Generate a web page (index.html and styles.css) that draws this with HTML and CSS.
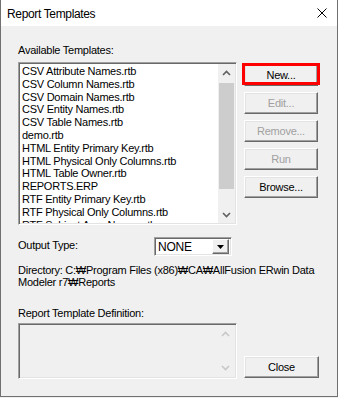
FILE: index.html
```html
<!DOCTYPE html>
<html lang="en">
<head>
<meta charset="UTF-8" />
<title>Report Templates</title>
<link rel="stylesheet" href="styles.css">
</head>
<body>

<div class="dialog">
  <!-- Title bar -->
  <div class="titlebar">
    <span class="title">Report Templates</span>
    <svg class="close-x" width="10" height="10" viewBox="0 0 10 10" aria-hidden="true">
      <path d="M0.5 0.5 L9.5 9.5 M9.5 0.5 L0.5 9.5" stroke="#000" stroke-width="1" fill="none" />
    </svg>
  </div>

  <div class="content">
    <div class="label">Available Templates:</div>

    <div class="top-row">
      <div class="listbox sunken">
        <ul class="items">
          <li>CSV Attribute Names.rtb</li>
          <li>CSV Column Names.rtb</li>
          <li>CSV Domain Names.rtb</li>
          <li>CSV Entity Names.rtb</li>
          <li>CSV Table Names.rtb</li>
          <li>demo.rtb</li>
          <li>HTML Entity Primary Key.rtb</li>
          <li>HTML Physical Only Columns.rtb</li>
          <li>HTML Table Owner.rtb</li>
          <li>REPORTS.ERP</li>
          <li>RTF Entity Primary Key.rtb</li>
          <li>RTF Physical Only Columns.rtb</li>
          <li>RTF Subject Area Names.rtb</li>
        </ul>
        <div class="scrollbar">
          <div class="arrow">
            <svg width="9" height="6" viewBox="0 0 9 6"><path d="M1 5 L4.5 1.5 L8 5" stroke="#606060" stroke-width="1.6" fill="none" /></svg>
          </div>
          <div class="track"><div class="thumb"></div></div>
          <div class="arrow">
            <svg width="9" height="6" viewBox="0 0 9 6"><path d="M1 1 L4.5 4.5 L8 1" stroke="#606060" stroke-width="1.6" fill="none" /></svg>
          </div>
        </div>
      </div>

      <div class="buttons">
        <button class="btn highlighted">New...</button>
        <button class="btn" disabled>Edit...</button>
        <button class="btn" disabled>Remove...</button>
        <button class="btn" disabled>Run</button>
        <button class="btn">Browse...</button>
      </div>
    </div>

    <div class="output-row">
      <span class="label">Output Type:</span>
      <div class="combo sunken">
        <span class="combo-value">NONE</span>
        <span class="combo-btn">
          <svg width="7" height="4" viewBox="0 0 7 4"><path d="M0 0 H7 L3.5 4 Z" fill="#000" /></svg>
        </span>
      </div>
    </div>

    <div class="directory">Directory: C:&#8361;Program Files (x86)&#8361;CA&#8361;AllFusion ERwin Data<br>Modeler r7&#8361;Reports</div>

    <div class="label def-label">Report Template Definition:</div>

    <div class="bottom-row">
      <div class="definition sunken">
        <div class="scrollbar disabled">
          <div class="arrow">
            <svg width="9" height="6" viewBox="0 0 9 6"><path d="M1 5 L4.5 1.5 L8 5" stroke="#c8c8c8" stroke-width="1.6" fill="none" /></svg>
          </div>
          <div class="track"></div>
          <div class="arrow">
            <svg width="9" height="6" viewBox="0 0 9 6"><path d="M1 1 L4.5 4.5 L8 1" stroke="#c8c8c8" stroke-width="1.6" fill="none" /></svg>
          </div>
        </div>
      </div>
      <button class="btn close-btn">Close</button>
    </div>
  </div>
</div>

</body>
</html>
```

FILE: styles.css
```css
/* Reset & base */
*, *::before, *::after {
  box-sizing: border-box;
}
body {
  margin: 0;
  background: #f0f0f0;
  font-family: 'Liberation Sans', Arial, sans-serif;
  font-size: 11px;
  letter-spacing: -0.25px;
  color: #000;
}

/* Dialog frame */
.dialog {
  width: 338px;
  height: 397px;
  background: #f0f0f0;
  border: 1px solid #707070;
  border-top: none;
  display: flex;
  flex-direction: column;
}

.titlebar {
  height: 26px;
  background: #fff;
  display: flex;
  align-items: center;
  justify-content: space-between;
  padding: 0 10px 0 6px;
}
.title {
  font-size: 12px;
  letter-spacing: -0.35px;
  padding-top: 1px;
}

.content {
  padding: 18px 0 0 17px;
}

.label {
  line-height: 13px;
}

/* 3D borders */
.sunken {
  border: 1px solid;
  border-color: #a0a0a0 #fff #fff #a0a0a0;
  box-shadow: inset 1px 1px 0 #696969, inset -1px -1px 0 #e3e3e3;
}

/* Top row: list + buttons */
.top-row {
  display: flex;
  gap: 7px;
  margin-top: 5px;
}

.listbox {
  width: 219px;
  height: 163px;
  background: #fff;
  display: flex;
  padding: 1px;
}

.items {
  list-style: none;
  margin: 0;
  padding: 1px 0 0 2px;
  flex: 1;
  overflow: hidden;
  line-height: 12.8px;
  white-space: nowrap;
}

.scrollbar {
  width: 17px;
  background: #f0f0f0;
  display: flex;
  flex-direction: column;
}
.scrollbar .arrow {
  height: 17px;
  display: flex;
  align-items: center;
  justify-content: center;
}
.scrollbar .track {
  flex: 1;
  padding: 2px 1px 17px;
}
.scrollbar .thumb {
  height: 106px;
  background: #cdcdcd;
}

/* Buttons */
.buttons {
  display: flex;
  flex-direction: column;
  gap: 6px;
  padding-top: 2px;
}

.btn {
  width: 74px;
  height: 22px;
  padding: 0;
  font-family: inherit;
  font-size: 11px;
  letter-spacing: -0.25px;
  color: #000;
  background: #f0f0f0;
  border: 1px solid;
  border-color: #fff #696969 #696969 #fff;
  box-shadow: inset -1px -1px 0 #a0a0a0, inset 1px 1px 0 #e3e3e3;
  position: relative;
}
.btn:disabled {
  color: #a0a0a0;
}
.btn.highlighted::after {
  content: '';
  position: absolute;
  left: -3px;
  right: -3px;
  top: -2px;
  bottom: 0;
  border: 3px solid #f00;
}

/* Output type */
.output-row {
  display: flex;
  align-items: center;
  margin-top: 12px;
}
.output-row .label {
  width: 136px;
  margin-top: -2px;
}
.combo {
  width: 78px;
  height: 19px;
  background: #fff;
  display: flex;
  align-items: center;
  padding: 2px 2px 2px 3px;
}
.combo-value {
  flex: 1;
  font-size: 12px;
}
.combo-btn {
  width: 17px;
  height: 15px;
  display: flex;
  align-items: center;
  justify-content: center;
  background: #f0f0f0;
  border: 1px solid;
  border-color: #fff #696969 #696969 #fff;
  box-shadow: inset -1px -1px 0 #a0a0a0;
}

.directory {
  margin-top: 8px;
  line-height: 12px;
}

.def-label {
  margin-top: 19px;
}

/* Definition box + Close */
.bottom-row {
  display: flex;
  gap: 7px;
  margin-top: 3px;
}
.definition {
  width: 219px;
  height: 56px;
  padding: 2px;
  display: flex;
  justify-content: flex-end;
}
.definition .scrollbar .arrow {
  height: 20px;
}
.close-btn {
  width: 75px;
  align-self: flex-end;
  margin-bottom: 1px;
}
```
